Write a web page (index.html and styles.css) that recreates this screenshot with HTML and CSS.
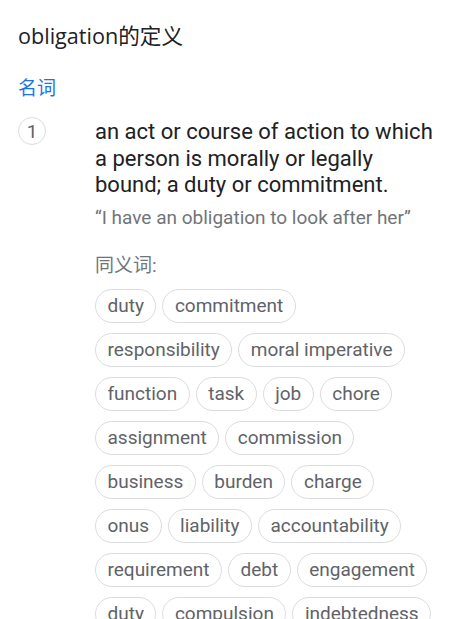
FILE: index.html
```html
<!DOCTYPE html>
<html>
<head>
<meta charset="utf-8">
<link rel="stylesheet" href="styles.css">
</head>
<body>
<div class="page">
  <h1 class="title">obligation的定义</h1>
  <div class="pos">名词</div>
  <div class="sense">
    <div class="num">1</div>
    <div class="body">
      <div class="def">an act or course of action to which a person is morally or legally bound; a duty or commitment.</div>
      <div class="example">“I have an obligation to look after her”</div>
      <div class="syn-label">同义词:</div>
      <div class="chips">
        <span class="chip">duty</span>
        <span class="chip">commitment</span>
        <span class="chip">responsibility</span>
        <span class="chip">moral imperative</span>
        <span class="chip">function</span>
        <span class="chip">task</span>
        <span class="chip">job</span>
        <span class="chip">chore</span>
        <span class="chip">assignment</span>
        <span class="chip">commission</span>
        <span class="chip">business</span>
        <span class="chip">burden</span>
        <span class="chip">charge</span>
        <span class="chip">onus</span>
        <span class="chip">liability</span>
        <span class="chip">accountability</span>
        <span class="chip">requirement</span>
        <span class="chip">debt</span>
        <span class="chip">engagement</span>
        <span class="chip">duty</span>
        <span class="chip">compulsion</span>
        <span class="chip">indebtedness</span>
      </div>
    </div>
  </div>
</div>
</body>
</html>
```
FILE: styles.css
```css
html, body {
  margin: 0;
  padding: 0;
  background: #fff;
}
body {
  font-family: Roboto, "Noto Sans CJK SC", sans-serif;
}
.page {
  padding: 20px 22px 0 18px;
}
.title {
  margin: 0;
  font-family: "Open Sans", "Noto Sans CJK SC", sans-serif;
  font-weight: 400;
  font-size: 21.6px;
  line-height: 32px;
  color: #202124;
}
.pos {
  margin-top: 24px;
  font-size: 19px;
  line-height: 26px;
  color: #1a73e8;
}
.sense {
  display: flex;
  margin-top: 16px;
}
.num {
  flex: none;
  width: 28px;
  height: 28px;
  border: 1px solid #dadce0;
  border-radius: 50%;
  box-sizing: border-box;
  display: flex;
  align-items: center;
  justify-content: center;
  font-size: 19px;
  color: #5f6368;
  margin-top: -1px;
  margin-right: 49px;
}
.body {
  flex: 1;
  min-width: 0;
}
.def {
  margin-top: 1px;
  font-size: 22px;
  line-height: 26.5px;
  color: #202124;
}
.example {
  margin-top: 6px;
  font-size: 19px;
  line-height: 26px;
  color: #70757a;
}
.syn-label {
  margin-top: 22px;
  font-size: 19px;
  line-height: 26px;
  color: #70757a;
}
.chips {
  margin-top: 10px;
  display: flex;
  flex-wrap: wrap;
  column-gap: 6px;
  row-gap: 10px;
}
.chip {
  display: inline-flex;
  align-items: center;
  height: 34px;
  box-sizing: border-box;
  padding: 0 11.5px;
  border: 1px solid #dadce0;
  border-radius: 17px;
  font-size: 19px;
  color: #5f6368;
  white-space: nowrap;
}
```
